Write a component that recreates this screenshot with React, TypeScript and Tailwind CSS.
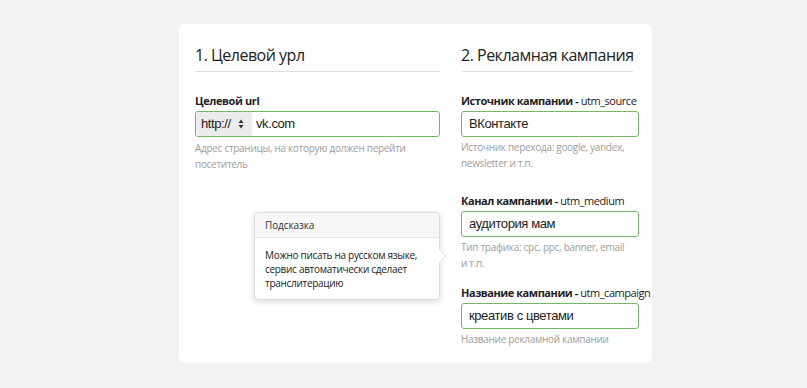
const FIELDS = [
  {
    label: "Источник кампании",
    utm: "utm_source",
    value: "ВКонтакте",
    help: ["Источник перехода: google, yandex,", "newsletter и т.п."],
    gap: "mt-0",
  },
  {
    label: "Канал кампании",
    utm: "utm_medium",
    value: "аудитория мам",
    help: ["Тип трафика: cpc, ppc, banner, email", "и т.п."],
    gap: "mt-[22px]",
  },
  {
    label: "Название кампании",
    utm: "utm_campaign",
    value: "креатив с цветами",
    help: ["Название рекламной кампании"],
    gap: "mt-[14px]",
  },
];

const sans = "font-['Open_Sans','Noto_Sans',sans-serif]";
const inputFont = "font-['Liberation_Sans',Arial,sans-serif] text-[13px] tracking-[-0.4px] text-[#222]";

export default function App() {
  return (
    <div className={`w-[807px] h-[388px] bg-[#f2f2f2] pt-[24px] pl-[179px] ${sans}`}>
      <div className="relative w-[473px] h-[339px] bg-white rounded-[6px] pl-[16px] pt-[19px] flex gap-[21px]">
        {/* Left: target url */}
        <div className="w-[245px]">
          <h2 className="text-[16px] tracking-[-0.5px] leading-[24px] text-[#222] pb-[4px] border-b border-[#dedede]">
            1. Целевой урл
          </h2>
          <p className="mt-[21px] text-[11px] tracking-[-0.4px] leading-[16px] font-bold text-[#222]">
            Целевой url
          </p>
          <div className="mt-[2px] h-[26px] rounded-[3px] border border-[#74b866] flex items-stretch overflow-hidden">
            <div className={`w-[56px] bg-[#ececec] flex items-center justify-between pl-[5px] pr-[8px] ${inputFont}`}>
              <span>http://</span>
              <svg width="6" height="10" viewBox="0 0 6 10">
                <path d="M3 0.5L5.5 4H0.5Z" fill="#333" />
                <path d="M3 9.5L5.5 6H0.5Z" fill="#333" />
              </svg>
            </div>
            <div className={`pl-[4px] flex items-center ${inputFont}`}>vk.com</div>
          </div>
          <p className="mt-[3px] text-[10px] tracking-[-0.3px] leading-[16px] text-[#9d9d9d]">
            Адрес страницы, на которую должен перейти
            <br />
            посетитель
          </p>
        </div>

        {/* Right: campaign */}
        <div className="w-[178px]">
          <h2 className="w-[172px] text-[16px] tracking-[-0.5px] leading-[24px] text-[#222] pb-[4px] border-b border-[#dedede] whitespace-nowrap">
            2. Рекламная кампания
          </h2>
          <div className="mt-[21px] flex flex-col">
            {FIELDS.map((f) => (
              <div key={f.utm} className={f.gap}>
                <p className="text-[11px] tracking-[-0.45px] leading-[16px] text-[#222] whitespace-nowrap">
                  <span className="font-bold">{f.label} - </span>
                  {f.utm}
                </p>
                <div className={`mt-[2px] h-[26px] rounded-[3px] border border-[#74b866] flex items-center pl-[7px] ${inputFont}`}>
                  {f.value}
                </div>
                <p className="mt-[2px] text-[10px] tracking-[-0.3px] leading-[16px] text-[#9d9d9d] whitespace-nowrap">
                  {f.help.map((h, j) => (
                    <span key={j} className="block">
                      {h}
                    </span>
                  ))}
                </p>
              </div>
            ))}
          </div>
        </div>

        {/* Tooltip */}
        <div className="absolute left-[75px] top-[188px] w-[186px] rounded-[4px] bg-white border border-[#dcdcdc] shadow-[0_2px_6px_rgba(0,0,0,0.15)]">
          <div className="h-[25px] bg-[#f7f7f7] border-b border-[#e8e8e8] rounded-t-[4px] flex items-center pl-[10px] text-[10px] tracking-[-0.1px] text-[#333]">
            Подсказка
          </div>
          <p className="px-[10px] pt-[10px] pb-[9px] text-[10px] tracking-[-0.3px] leading-[14px] text-[#222]">
            Можно писать на русском языке,
            <br />
            сервис автоматически сделает
            <br />
            транслитерацию
          </p>
          <div className="absolute right-[-7px] top-[36px] w-0 h-0 border-y-[7px] border-y-transparent border-l-[7px] border-l-[#dcdcdc]" />
          <div className="absolute right-[-6px] top-[37px] w-0 h-0 border-y-[6px] border-y-transparent border-l-[6px] border-l-white" />
        </div>
      </div>
    </div>
  );
}
